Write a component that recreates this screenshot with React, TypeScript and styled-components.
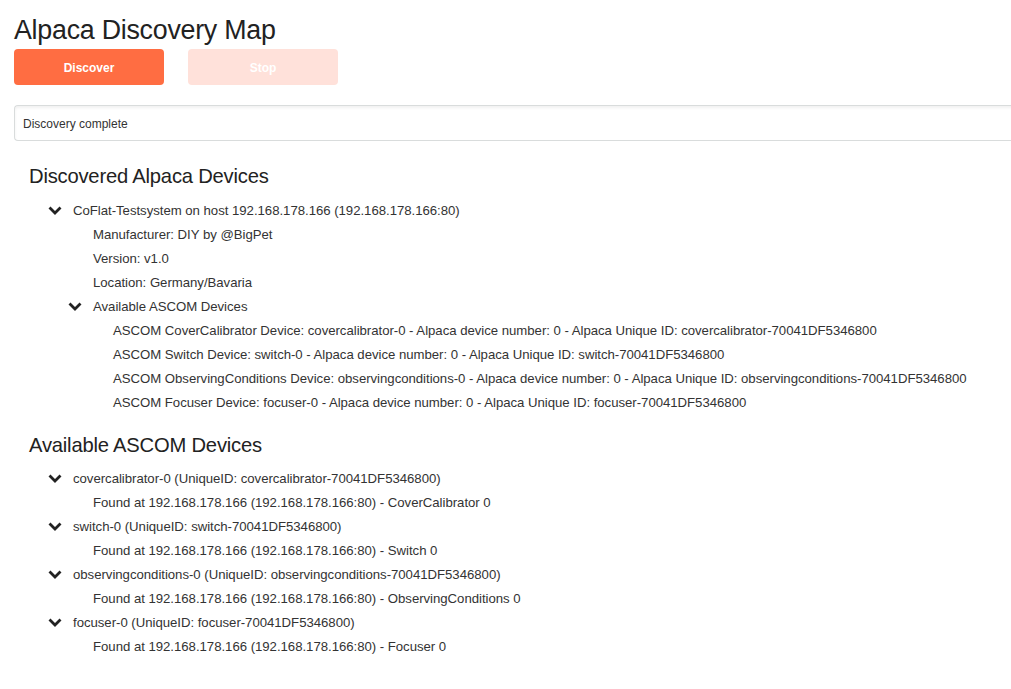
import { FunctionComponent, ReactNode } from 'react';
import styled, { createGlobalStyle } from 'styled-components';

const GlobalStyle = createGlobalStyle`
    html, body {
        margin: 0;
        padding: 0;
        background: #ffffff;
        overflow: hidden;
    }
    body {
        font-family: "Liberation Sans", Arial, sans-serif;
        color: #333333;
    }
`;

const accentColor = '#ff6d42';

const Page = styled.div`
    width: 1011px;
    height: 689px;
    box-sizing: border-box;
    padding: 14px 0 0 14px;
    overflow: hidden;
`;

const Title = styled.h1`
    margin: 0;
    font-size: 26.8px;
    font-weight: normal;
    line-height: 32px;
    color: #222222;
    letter-spacing: -0.25px;
`;

const ButtonRow = styled.div`
    display: flex;
    gap: 24px;
    margin-top: 3px;
`;

const Button = styled.button<{ disabled?: boolean }>`
    width: 150px;
    height: 36px;
    border: none;
    border-radius: 4px;
    background-color: ${(p) => (p.disabled ? '#ffe1da' : accentColor)};
    color: #ffffff;
    font-family: "Liberation Sans", Arial, sans-serif;
    font-size: 12px;
    font-weight: bold;
    padding: 2px 0 0;
`;

const StatusBox = styled.div`
    margin-top: 20px;
    width: 1010px;
    height: 36px;
    box-sizing: border-box;
    border: 1px solid #d9dcdc;
    border-right: none;
    border-radius: 4px 0 0 4px;
    box-shadow: inset 0 2px 3px rgba(0, 0, 0, 0.06);
    display: flex;
    align-items: center;
    padding: 2px 0 0 8px;
    font-size: 12px;
    color: #333333;
`;

const Section = styled.section<{ gap: number }>`
    padding-left: 15px;
    margin-top: ${(p) => p.gap}px;
`;

const SectionTitle = styled.h2`
    margin: 0;
    font-size: 20.2px;
    font-weight: normal;
    line-height: 28px;
    color: #222222;
    letter-spacing: -0.2px;
`;

const Tree = styled.ul<{ top: number }>`
    list-style: none;
    margin: ${(p) => p.top}px 0 0;
    padding: 0 0 0 19px;
`;

const Row = styled.li<{ indent?: number }>`
    display: flex;
    align-items: center;
    height: 24px;
    font-size: 13.2px;
    padding-left: ${(p) => p.indent ?? 0}px;
    white-space: nowrap;
    letter-spacing: -0.03px;
`;

const Chevron = styled.svg`
    width: 14px;
    height: 9px;
    margin: 0 11px 0 0;
    flex: none;
`;

const ChevronIcon = () => (
    <Chevron viewBox="0 0 14 9">
        <polyline points="1.5,1.5 7,7 12.5,1.5" fill="none" stroke="#222" strokeWidth="2.8" />
    </Chevron>
);

const Node: FunctionComponent<{ label: string; indent?: number; children?: ReactNode }> = ({ label, indent = 0, children }) => (
    <>
        <Row indent={indent}>
            <ChevronIcon />
            {label}
        </Row>
        {children}
    </>
);

const Leaf: FunctionComponent<{ label: string; indent: number }> = ({ label, indent }) => (
    <Row indent={indent}>{label}</Row>
);

const ascomDevices = [
    'ASCOM CoverCalibrator Device: covercalibrator-0 - Alpaca device number: 0 - Alpaca Unique ID: covercalibrator-70041DF5346800',
    'ASCOM Switch Device: switch-0 - Alpaca device number: 0 - Alpaca Unique ID: switch-70041DF5346800',
    'ASCOM ObservingConditions Device: observingconditions-0 - Alpaca device number: 0 - Alpaca Unique ID: observingconditions-70041DF5346800',
    'ASCOM Focuser Device: focuser-0 - Alpaca device number: 0 - Alpaca Unique ID: focuser-70041DF5346800',
];

const available = [
    { id: 'covercalibrator-0', uid: 'covercalibrator-70041DF5346800', type: 'CoverCalibrator 0' },
    { id: 'switch-0', uid: 'switch-70041DF5346800', type: 'Switch 0' },
    { id: 'observingconditions-0', uid: 'observingconditions-70041DF5346800', type: 'ObservingConditions 0' },
    { id: 'focuser-0', uid: 'focuser-70041DF5346800', type: 'Focuser 0' },
];

const host = '192.168.178.166 (192.168.178.166:80)';

export default function App() {
    return (
        <Page>
            <GlobalStyle />
            <Title>Alpaca Discovery Map</Title>
            <ButtonRow>
                <Button>Discover</Button>
                <Button disabled>Stop</Button>
            </ButtonRow>
            <StatusBox>Discovery complete</StatusBox>

            <Section gap={21}>
                <SectionTitle>Discovered Alpaca Devices</SectionTitle>
                <Tree top={8}>
                    <Node label={`CoFlat-Testsystem on host ${host}`}>
                        <Leaf indent={45} label="Manufacturer: DIY by @BigPet" />
                        <Leaf indent={45} label="Version: v1.0" />
                        <Leaf indent={45} label="Location: Germany/Bavaria" />
                        <Node indent={20} label="Available ASCOM Devices">
                            {ascomDevices.map((d) => (
                                <Leaf key={d} indent={65} label={d} />
                            ))}
                        </Node>
                    </Node>
                </Tree>
            </Section>

            <Section gap={17}>
                <SectionTitle>Available ASCOM Devices</SectionTitle>
                <Tree top={7}>
                    {available.map((a) => (
                        <Node key={a.id} label={`${a.id} (UniqueID: ${a.uid})`}>
                            <Leaf indent={45} label={`Found at ${host} - ${a.type}`} />
                        </Node>
                    ))}
                </Tree>
            </Section>
        </Page>
    );
}
